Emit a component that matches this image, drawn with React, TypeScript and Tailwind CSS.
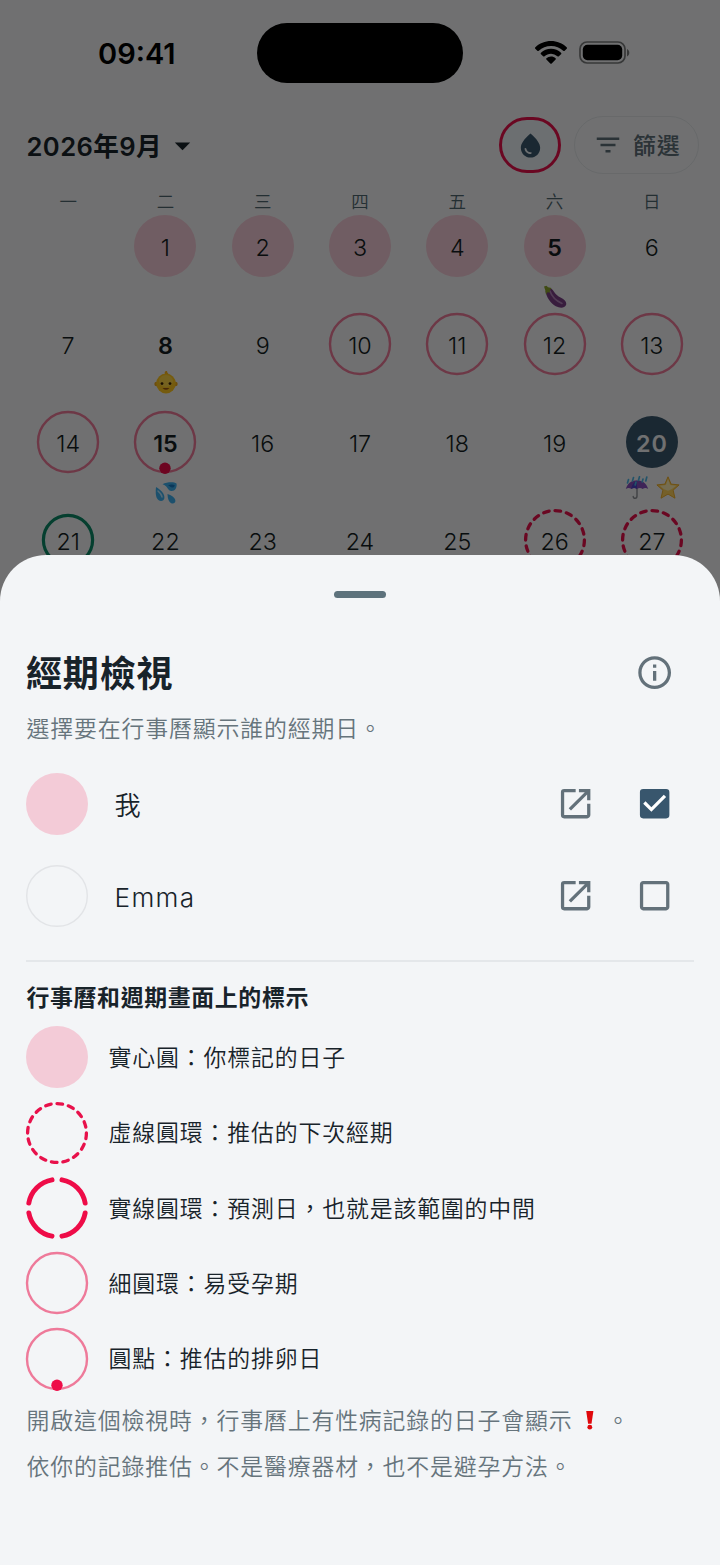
import clsx from 'clsx'
import type { ReactNode } from 'react'
import {
  MdArrowDropDown,
  MdCheckBox,
  MdCheckBoxOutlineBlank,
  MdFilterList,
  MdInfoOutline,
  MdOpenInNew,
  MdWaterDrop,
} from 'react-icons/md'

type Mark = 'none' | 'period' | 'fertile' | 'ovulation' | 'estimate' | 'predicted' | 'start' | 'today' | 'empty'
type Sticker = 'eggplant' | 'baby' | 'drops' | 'umbrella' | 'star'

interface Day {
  day: number
  mark?: Mark
  bold?: boolean
  stickers?: Sticker[]
}

const WEEKDAYS = ['一', '二', '三', '四', '五', '六', '日']

const WEEKS: (Day | null)[][] = [
  [
    null,
    { day: 1, mark: 'period' },
    { day: 2, mark: 'period' },
    { day: 3, mark: 'period' },
    { day: 4, mark: 'period' },
    { day: 5, mark: 'period', bold: true, stickers: ['eggplant'] },
    { day: 6 },
  ],
  [
    { day: 7 },
    { day: 8, bold: true, stickers: ['baby'] },
    { day: 9 },
    { day: 10, mark: 'fertile' },
    { day: 11, mark: 'fertile' },
    { day: 12, mark: 'fertile' },
    { day: 13, mark: 'fertile' },
  ],
  [
    { day: 14, mark: 'fertile' },
    { day: 15, mark: 'ovulation', bold: true, stickers: ['drops'] },
    { day: 16 },
    { day: 17 },
    { day: 18 },
    { day: 19 },
    { day: 20, mark: 'today', bold: true, stickers: ['umbrella', 'star'] },
  ],
  [
    { day: 21, mark: 'start' },
    { day: 22 },
    { day: 23 },
    { day: 24 },
    { day: 25 },
    { day: 26, mark: 'estimate' },
    { day: 27, mark: 'estimate' },
  ],
]

const LEGEND: { mark: Mark; label: string }[] = [
  { mark: 'period', label: '實心圓：你標記的日子' },
  { mark: 'estimate', label: '虛線圓環：推估的下次經期' },
  { mark: 'predicted', label: '實線圓環：預測日，也就是該範圍的中間' },
  { mark: 'fertile', label: '細圓環：易受孕期' },
  { mark: 'ovulation', label: '圓點：推估的排卵日' },
]

function MarkRing({ mark }: { mark: Mark }) {
  return (
    <svg viewBox="0 0 62 62" className="size-[62px] shrink-0 overflow-visible" fill="none">
      {mark === 'period' && <circle cx="31" cy="31" r="31" fill="#f3cbd7" />}
      {mark === 'empty' && <circle cx="31" cy="31" r="30.3" stroke="#e2e4e7" strokeWidth="1.4" />}
      {(mark === 'fertile' || mark === 'ovulation') && (
        <circle cx="31" cy="31" r="30" stroke="#ee7a9a" strokeWidth="2.4" />
      )}
      {mark === 'ovulation' && <circle cx="31" cy="57.3" r="5.7" fill="#ee0c48" />}
      {mark === 'estimate' && (
        <circle
          cx="31"
          cy="31"
          r="29.4"
          stroke="#e8114b"
          strokeWidth="3.3"
          strokeLinecap="round"
          pathLength="360"
          strokeDasharray="11 11.5"
          transform="rotate(-90 31 31)"
        />
      )}
      {mark === 'predicted' && (
        <circle
          cx="31"
          cy="31"
          r="28.6"
          stroke="#ee0c48"
          strokeWidth="4.9"
          strokeLinecap="round"
          pathLength="360"
          strokeDasharray="70 20"
          transform="rotate(-80 31 31)"
        />
      )}
      {mark === 'start' && <circle cx="31" cy="31" r="24.6" stroke="#0b8a68" strokeWidth="3.2" />}
      {mark === 'today' && <circle cx="31" cy="31" r="26" fill="#3a586e" />}
    </svg>
  )
}

function StickerIcon({ name }: { name: Sticker }) {
  return (
    <svg viewBox="0 0 24 24" className="size-6">
      {name === 'eggplant' && (
        <>
          <path
            d="M4 3.5c3-1.2 5.4.4 7 3.2 1.6 2.5 3.5 4.3 7 6.1 4 2 6.2 4.800 4.900 7.500-1.400 2.900-6 3-10.100.900C7.600 18.500 3.200 11.500 2.600 6.500Z"
            fill="#7b3f86"
          />
          <path d="M7 6c1.500 5 5 9.200 12 12.500" stroke="#b184b8" strokeWidth="1.600" fill="none" strokeLinecap="round" />
          <path d="M1 1.500 3.500.8 5 2.300 8.500 3 7 5.200 6.500 8 4.800 7 3 9.500 2.200 5Z" fill="#8ca32c" />
        </>
      )}
      {name === 'baby' && (
        <>
          <path d="M12 5C9.800 3 10.500.8 13.200.9c-.6 1 .6 1.600 1.500 3.600Z" fill="#ffb515" />
          <circle cx="2.600" cy="14" r="2.300" fill="#f0a91c" />
          <circle cx="21.400" cy="14" r="2.300" fill="#f0a91c" />
          <ellipse cx="12" cy="13.500" rx="9.800" ry="9.900" fill="#ffc61f" />
          <ellipse cx="12" cy="11" rx="7" ry="6" fill="#ffd646" />
          <circle cx="8" cy="13.600" r="1.400" fill="#3d2506" />
          <circle cx="16" cy="13.600" r="1.400" fill="#3d2506" />
          <path d="M8.500 18.200c2 1.800 5 1.800 7 0Z" fill="#7c3010" />
        </>
      )}
      {name === 'drops' && (
        <>
          <path d="M8.500 3.200C13 1 20 .8 22.500 2.500c.8 4-1.500 7.700-5 7.500-4-.2-3.500-5.200-9-6.800Z" fill="#3dafee" />
          <path d="M2 6c4.500 2.600 8.700 6.500 8.400 11-.3 3-3.600 4-6 2.100C1.400 16.500 1.500 11 2 6Z" fill="#3dafee" />
          <path d="M13.500 13c3.500 1.200 7.800 3.300 7.900 6.700 0 2.500-2.500 3.400-4.500 2.200-2.700-1.600-3.200-5.500-3.400-8.900Z" fill="#3dafee" />
          <path d="M14 4.200c2.500-.8 5-.8 6.800 0-.2 1.600-1.200 2.300-2.500 2.300-1.800 0-2.300-1.500-4.300-2.300Z" fill="#1678c2" />
          <path d="M4 10c2.300 2 3.800 3.700 4 6" stroke="#b8e6ff" strokeWidth="1.500" fill="none" strokeLinecap="round" />
        </>
      )}
      {name === 'umbrella' && (
        <>
          <path d="M12 10v10c0 3-3.800 3-3.800.5" stroke="#8c8f94" strokeWidth="1.400" fill="none" strokeLinecap="round" />
          <path d="M.8 13C2.500 7 6.500 4.500 12 4.500S21.500 7 23.200 13c-2-1.300-4-1.200-5.500 0-1.800-1.300-3.800-1.300-5.700 0-1.900-1.300-3.900-1.300-5.700 0-1.500-1.200-3.500-1.300-5.500 0Z" fill="#8750bd" />
          <path d="M12 4.500C8 7 6.700 9.500 6.300 13c1.800-1.300 3.800-1.300 5.700 0Z" fill="#5044c8" />
          <path
            d="M3.500 3.500 2.500 7M8.500 1.500 7.500 5M14.500.8 13.500 4.300M21.800 1 20.800 5M18 3l-.8 3M11 6l-.8 3"
            stroke="#4eb5e5"
            strokeWidth="1.700"
            strokeLinecap="round"
          />
        </>
      )}
      {name === 'star' && (
        <>
          <path
            d="m12 .8 3.100 7.300 8 .8-6 5.300 1.900 8-7-4.100-7 4.100 1.900-8-6-5.300 8-.8Z"
            fill="#ffd25c"
            stroke="#eea91d"
            strokeWidth=".9"
            strokeLinejoin="round"
          />
          <path d="m12 3 2.200 6 6 .8-4.700 3.500-3.500 1.500-4-1.500-4.200-3.500 6-.8Z" fill="#ffedb0" />
        </>
      )}
    </svg>
  )
}

function DayCell({ item }: { item: Day }) {
  const mark = item.mark ?? 'none'
  return (
    <div className="flex h-[98.100px] flex-col items-center">
      <div className="grid size-[62px] place-items-center">
        <div className="col-start-1 row-start-1 size-[62px]">
          <MarkRing mark={mark} />
        </div>
        <span
          className={clsx(
            'col-start-1 row-start-1 mt-[3px] text-[23.300px] leading-none',
            item.bold ? 'font-semibold' : 'font-light',
            mark === 'today' ? 'tracking-[1px] text-[#f3f5f7]' : 'text-[#141d22]',
          )}
        >
          {item.day}
        </span>
      </div>
      {item.stickers && (
        <div
          className={clsx(
            'flex gap-[7px] pl-px',
            mark === 'none' ? '-mt-[5px]' : mark === 'today' ? 'mt-[3px]' : 'mt-[8px]',
          )}
        >
          {item.stickers.map((s) => (
            <StickerIcon key={s} name={s} />
          ))}
        </div>
      )}
    </div>
  )
}

function StatusBar() {
  return (
    <div className="flex h-[83px] pt-[23px] text-black">
      <span className="w-[257px] pt-[15px] pl-[98px] text-[29px] leading-[32px] font-semibold">09:41</span>
      <div className="h-[60px] w-[206px] rounded-full bg-black" />
      <svg viewBox="0 0 32 23" className="mt-[18px] ml-[72px] h-[23px] w-8" fill="currentColor">
        <path d="M16 0c6 0 11.500 2.300 15.600 6.200.5.400.5 1 .1 1.500l-2 2c-.4.400-1 .4-1.500 0A17.600 17.600 0 0 0 16 5c-4.700 0-9 1.800-12.200 4.700-.5.400-1.100.4-1.500 0l-2-2c-.4-.5-.4-1.100.1-1.500C4.500 2.300 10 0 16 0Z" />
        <path d="M16 7.800c3.900 0 7.400 1.500 10 3.900.5.500.5 1.100 0 1.500l-2.100 2.100c-.4.400-1 .4-1.500 0A9.500 9.500 0 0 0 16 12.800c-2.500 0-4.700.9-6.400 2.500-.5.400-1.100.4-1.500 0L6 13.200c-.5-.4-.5-1 0-1.500 2.600-2.400 6.100-3.900 10-3.900Z" />
        <path d="M16 15.500c1.800 0 3.400.6 4.600 1.700.4.400.4 1 0 1.400l-3.900 3.900c-.4.400-1 .4-1.400 0l-3.900-3.900c-.4-.4-.4-1 0-1.400a7 7 0 0 1 4.600-1.700Z" />
      </svg>
      <svg viewBox="0 0 51 23" className="mt-[18px] ml-[12px] h-[23px] w-[51px]" fill="none">
        <rect x="1" y="1" width="45" height="21" rx="7" stroke="#000" strokeOpacity=".5" strokeWidth="1.700" />
        <rect x="3.800" y="3.800" width="39.400" height="15.400" rx="4.600" fill="#000" />
        <path d="M48 8v7.400c1.500-.7 2.300-2 2.300-3.700S49.500 8.700 48 8Z" fill="#000" fillOpacity=".5" />
      </svg>
    </div>
  )
}

function CalendarScreen() {
  return (
    <div className="h-full bg-[#f3f5f7]">
      <StatusBar />
      <div className="mt-[33px] flex h-[58px] items-center pr-[21px] pl-[26.500px]">
        <h1 className="pt-[3px] text-[25.600px] leading-none font-semibold tracking-[0.400px] whitespace-nowrap text-[#1a242a]">
          2026年9月
        </h1>
        <MdArrowDropDown className="ml-[2px] size-[37px] text-[#1a242a]" />
        <button className="ml-auto grid h-[56px] w-[62px] place-items-center rounded-full border-[3px] border-[#e8114b] bg-[#ecf2f6]">
          <MdWaterDrop className="size-[29px] text-[#3a586e]" />
        </button>
        <button className="ml-[13px] flex h-[58px] w-[125px] items-center rounded-full border-[1.5px] border-[#e2e4e7] pl-[18px] text-[#5f6f78]">
          <MdFilterList className="size-[30px]" />
          <span className="ml-[10px] pt-[2px] text-[22.900px] font-medium tracking-[0.800px] whitespace-nowrap">篩選</span>
        </button>
      </div>
      <div className="mt-[14px] grid h-[27px] grid-cols-7 items-center px-[19.500px] text-center text-[17.500px] leading-none font-[350] text-[#4f666f]">
        {WEEKDAYS.map((w) => (
          <span key={w}>{w}</span>
        ))}
      </div>
      <div className="grid grid-cols-7 px-[19.500px]">
        {WEEKS.flat().map((item, i) => (item ? <DayCell key={i} item={item} /> : <div key={i} />))}
      </div>
    </div>
  )
}

function PersonRow({ name, mark, checked }: { name: string; mark: Mark; checked?: boolean }) {
  return (
    <div className="flex h-[91.700px] items-center">
      <MarkRing mark={mark} />
      <span className="ml-[26.500px] flex-1 pt-[4px] text-[26.200px] font-[350] tracking-[1.300px]">{name}</span>
      <MdOpenInNew className="size-[39.300px] text-[#63717a]" />
      {checked ? (
        <span className="ml-[39px] bg-[linear-gradient(#fff,#fff)] bg-size-[24px_24px] bg-center bg-no-repeat">
          <MdCheckBox className="size-[39.300px] text-[#38566d]" />
        </span>
      ) : (
        <MdCheckBoxOutlineBlank className="ml-[39px] size-[39.300px] text-[#63717a]" />
      )}
    </div>
  )
}

function Note({ children, className }: { children: ReactNode; className?: string }) {
  return (
    <p
      className={clsx(
        'h-[34px] pl-[0.500px] text-[22.900px] leading-[37px] font-[350] tracking-[0.850px] whitespace-nowrap text-[#66747c]',
        className,
      )}
    >
      {children}
    </p>
  )
}

function CycleSheet() {
  return (
    <section className="absolute inset-x-0 top-[555px] bottom-0 flex flex-col rounded-t-[46px] bg-[#f3f5f7] px-[26px] pt-[36px] text-[#18232a]">
      <div className="h-[6.500px] w-[52px] shrink-0 self-center rounded-full bg-[#5d727c]" />
      <div className="mt-[55px] flex h-10 items-center justify-between pr-[20px]">
        <h2 className="pt-[3px] text-[36px] leading-none font-bold tracking-[0.850px]">經期檢視</h2>
        <MdInfoOutline className="size-[39.300px] text-[#63717a]" />
      </div>
      <Note className="mt-[18px]">選擇要在行事曆顯示誰的經期日。</Note>
      <div className="mt-[13.500px] pr-[20px]">
        <PersonRow name="我" mark="period" checked />
        <PersonRow name="Emma" mark="empty" />
      </div>
      <hr className="mt-[18.500px] border-t-2 border-[#e4e7ea]" />
      <h3 className="mt-5 h-[30px] pl-[0.500px] text-[22.900px] leading-[32px] font-semibold tracking-[0.650px]">
        行事曆和週期畫面上的標示
      </h3>
      <ul className="mt-[14.500px] flex flex-col gap-[13.300px]">
        {LEGEND.map(({ mark, label }) => (
          <li key={mark} className="flex h-[62px] items-center gap-[20.500px]">
            <MarkRing mark={mark} />
            <span className="pt-[2px] text-[22.900px] font-[350] tracking-[0.850px] whitespace-nowrap">{label}</span>
          </li>
        ))}
      </ul>
      <Note className="mt-[13.500px]">
        開啟這個檢視時，行事曆上有性病記錄的日子會顯示
        <svg viewBox="0 0 34 20" className="inline-block h-5 w-[34px] align-[-2px]" fill="#e0080c">
          <path d="M13.200 0h7.200l-1.900 12.800h-3.400Z" />
          <circle cx="16.800" cy="16.200" r="2.400" />
        </svg>
        。
      </Note>
      <Note className="mt-3">依你的記錄推估。不是醫療器材，也不是避孕方法。</Note>
    </section>
  )
}

export default function App() {
  return (
    <main
      lang="zh-Hant"
      className="relative h-[1565px] w-[720px] overflow-hidden font-['Inter','Noto_Sans_CJK_TC',sans-serif]"
    >
      <CalendarScreen />
      <div className="absolute inset-0 bg-black/54" />
      <CycleSheet />
    </main>
  )
}
